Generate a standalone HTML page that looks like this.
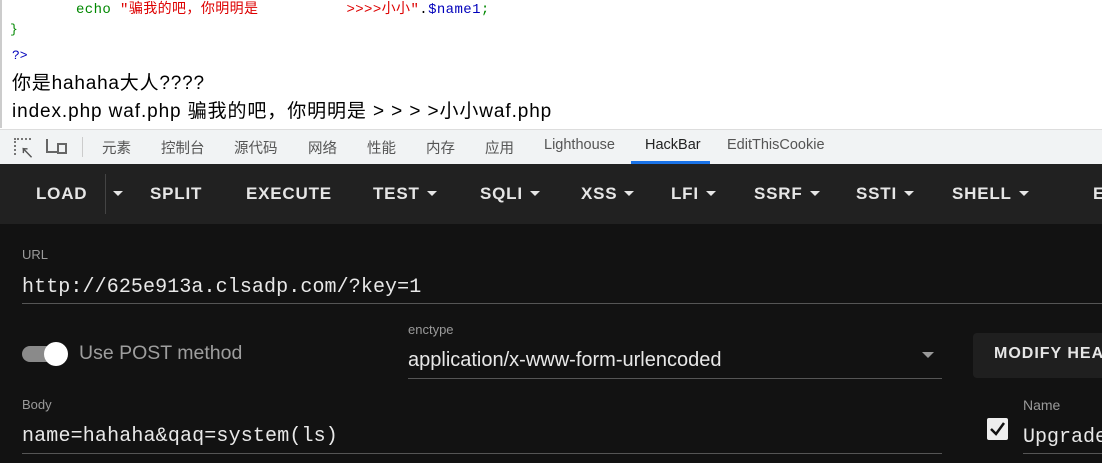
<!DOCTYPE html>
<html><head><meta charset="utf-8"><style>
*{margin:0;padding:0;box-sizing:border-box}
body{width:1102px;height:463px;overflow:hidden;background:#fff;position:relative;font-family:"Liberation Sans","Noto Sans CJK SC",sans-serif}
.a{position:absolute;white-space:nowrap}
.mono{font-family:"Liberation Mono","Noto Sans CJK SC",monospace}
.tab{font-size:14.5px;color:#555;top:137px}
.btn{top:184px;font-size:17px;font-weight:bold;color:#e6e6e6;letter-spacing:0.8px}
.car{display:inline-block;width:0;height:0;border-left:5px solid transparent;border-right:5px solid transparent;border-top:5px solid #e6e6e6;vertical-align:middle;margin-left:7px;margin-top:-3px}
.lbl{font-size:13px;color:#9a9a9a}
.line{position:absolute;height:1px;background:#555}
</style></head><body>
<div class="a" style="left:0;top:0;width:2px;height:128px;background:#ccc"></div>
<div class="a mono" style="left:76px;top:-2px;font-size:14px;letter-spacing:0.4px;color:#080"><span>echo</span> <span style="color:#d00">"骗我的吧，你明明是&nbsp;&nbsp;&nbsp;&nbsp;&nbsp;&nbsp;&nbsp;&nbsp;&nbsp;&nbsp;>>>>小小"</span><span style="color:#000">.</span><span style="color:#00b">$name1</span><span style="color:#080">;</span></div>
<div class="a mono" style="left:10px;top:22px;font-size:13px;color:#080">}</div>
<div class="a mono" style="left:12px;top:48px;font-size:13px;color:#00b">?&gt;</div>
<div class="a" style="left:12px;top:68px;font-size:19px;letter-spacing:0.8px;color:#000">你是hahaha大人????</div>
<div class="a" style="left:12px;top:96px;font-size:19px;letter-spacing:0.9px;color:#000">index.php waf.php 骗我的吧，你明明是 &gt; &gt; &gt; &gt;小小waf.php</div>

<div class="a" style="left:0;top:129px;width:1102px;height:35px;background:#f1f3f4;border-top:1px solid #ddd"></div>
<div class="a" style="left:14px;top:138px;width:17px;height:17px;border:2px dotted #777;border-right:none;border-bottom:none"></div>
<div class="a" style="left:20px;top:143px;font-size:14px;color:#555;font-weight:bold">↖</div>
<div class="a" style="left:46px;top:139px;width:13px;height:14px;border-left:2px solid #666;border-bottom:2px solid #666"></div>
<div class="a" style="left:57px;top:143px;width:10px;height:11px;border:2px solid #666"></div>
<div class="a" style="left:82px;top:137px;width:1px;height:20px;background:#ccc"></div>
<div class="a tab" style="left:102px">元素</div>
<div class="a tab" style="left:161px">控制台</div>
<div class="a tab" style="left:234px">源代码</div>
<div class="a tab" style="left:308px">网络</div>
<div class="a tab" style="left:367px">性能</div>
<div class="a tab" style="left:426px">内存</div>
<div class="a tab" style="left:485px">应用</div>
<div class="a tab" style="left:544px">Lighthouse</div>
<div class="a tab" style="left:645px;color:#222">HackBar</div>
<div class="a" style="left:631px;top:161px;width:79px;height:3px;background:#1a73e8"></div>
<div class="a tab" style="left:727px">EditThisCookie</div>

<div class="a" style="left:0;top:164px;width:1102px;height:60px;background:#212121"></div>
<div class="a" style="left:0;top:224px;width:1102px;height:239px;background:#121212"></div>
<div class="a btn" style="left:36px">LOAD</div>
<div class="a" style="left:105px;top:174px;width:1px;height:40px;background:#444"></div>
<div class="a btn" style="left:106px"><span class="car"></span></div>
<div class="a btn" style="left:150px">SPLIT</div>
<div class="a btn" style="left:246px">EXECUTE</div>
<div class="a btn" style="left:373px">TEST<span class="car"></span></div>
<div class="a btn" style="left:480px">SQLI<span class="car"></span></div>
<div class="a btn" style="left:581px">XSS<span class="car"></span></div>
<div class="a btn" style="left:671px">LFI<span class="car"></span></div>
<div class="a btn" style="left:754px">SSRF<span class="car"></span></div>
<div class="a btn" style="left:856px">SSTI<span class="car"></span></div>
<div class="a btn" style="left:952px">SHELL<span class="car"></span></div>
<div class="a btn" style="left:1093px">E</div>

<div class="a lbl" style="left:22px;top:247px">URL</div>
<div class="a mono" style="left:22px;top:276px;font-size:20px;letter-spacing:0.1px;color:#e8e8e8">http://625e913a.clsadp.com/?key=1</div>
<div class="line" style="left:22px;top:303px;width:1080px"></div>

<div class="a" style="left:22px;top:346px;width:40px;height:16px;border-radius:8px;background:#8a8a8a"></div>
<div class="a" style="left:44px;top:342px;width:24px;height:24px;border-radius:12px;background:#fff"></div>
<div class="a" style="left:79px;top:342px;font-size:19.5px;color:#9e9e9e">Use POST method</div>

<div class="a lbl" style="left:408px;top:322px">enctype</div>
<div class="a" style="left:408px;top:349px;font-size:20px;color:#e8e8e8">application/x-www-form-urlencoded</div>
<div class="a" style="left:922px;top:352px;border-left:6px solid transparent;border-right:6px solid transparent;border-top:6px solid #999"></div>
<div class="line" style="left:408px;top:378px;width:534px"></div>

<div class="a" style="left:973px;top:333px;width:140px;height:45px;background:#1f1f1f;border-radius:4px"></div>
<div class="a" style="left:994px;top:345px;font-size:16px;font-weight:bold;color:#e6e6e6;letter-spacing:1px">MODIFY HEADER</div>

<div class="a lbl" style="left:22px;top:397px">Body</div>
<div class="a mono" style="left:22px;top:425px;font-size:20px;letter-spacing:0.15px;color:#e8e8e8">name=hahaha&amp;qaq=system(ls)</div>
<div class="line" style="left:22px;top:453px;width:920px"></div>

<div class="a" style="left:987px;top:418px;width:21px;height:22px;background:#eee;border-radius:2px"></div>
<svg class="a" style="left:987px;top:418px" width="21" height="22"><path d="M4 11 L9 16 L17 5" stroke="#111" stroke-width="2.5" fill="none"/></svg>
<div class="a lbl" style="left:1023px;top:397px;font-size:14px">Name</div>
<div class="a mono" style="left:1023px;top:426px;font-size:20px;color:#e8e8e8">Upgrade</div>
<div class="line" style="left:1023px;top:453px;width:79px"></div>
</body></html>
